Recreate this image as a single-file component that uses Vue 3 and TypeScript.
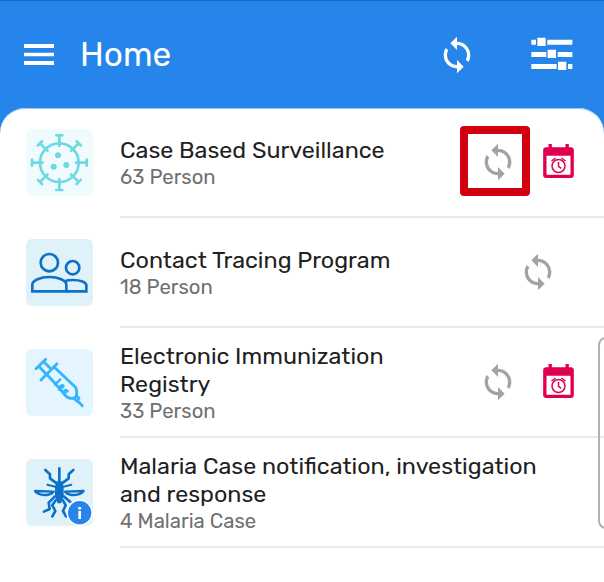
<script setup lang="ts">
type IconName = 'virus' | 'people' | 'syringe' | 'mosquito'

interface Program {
  icon: IconName
  title: string[]
  count: string
  sync: boolean
  calendar: boolean
  marked: boolean
}

const programs: Program[] = [
  {
    icon: 'virus',
    title: ['Case Based Surveillance'],
    count: '63 Person',
    sync: true,
    calendar: true,
    marked: true,
  },
  {
    icon: 'people',
    title: ['Contact Tracing Program'],
    count: '18 Person',
    sync: true,
    calendar: false,
    marked: false,
  },
  {
    icon: 'syringe',
    title: ['Electronic Immunization', 'Registry'],
    count: '33 Person',
    sync: true,
    calendar: true,
    marked: false,
  },
  {
    icon: 'mosquito',
    title: ['Malaria Case notification, investigation', 'and response'],
    count: '4 Malaria Case',
    sync: false,
    calendar: false,
    marked: false,
  },
]

const spokes = [0, 45, 90, 135, 180, 225, 270, 315]
const syncPath =
  'M12 4V1L8 5l4 4V6c3.31 0 6 2.69 6 6 0 1.01-.25 1.97-.7 2.8l1.46 1.46C19.54 15.03 20 13.57 20 12c0-4.42-3.58-8-8-8zm0 14c-3.31 0-6-2.69-6-6 0-1.01.25-1.97.7-2.8L5.24 7.74C4.46 8.97 4 10.43 4 12c0 4.42 3.58 8 8 8v3l4-4-4-4v3z'
</script>

<template>
  <div class="screen">
    <header class="bar">
      <svg class="menu" viewBox="0 0 90 63">
        <path d="M0 0h90v12H0zM0 26h90v11H0zM0 51h90v12H0z" />
      </svg>
      <h1 class="heading">Home</h1>
      <svg class="sync" viewBox="0 0 24 24"><path :d="syncPath" /></svg>
      <svg class="filters" viewBox="333 111 124 102">
        <path
          d="M333 119h14v15h-14zM351 113h25v25h-25zM381 119h75v15h-75zM333 156h45v15h-45zM382 149h25v25h-25zM412 156h44v15h-44zM333 192h76v15h-76zM413 185h25v25h-25zM443 192h13v15h-13z"
        />
      </svg>
    </header>

    <main class="sheet">
      <article v-for="program in programs" :key="program.icon" class="row">
        <div class="tile" :class="program.icon">
          <svg v-if="program.icon === 'virus'" class="art" viewBox="33 27 201 201">
            <g fill="none" stroke="#6fd9e3" stroke-linecap="round">
              <circle cx="133" cy="128" r="58" stroke-width="8" />
              <path
                v-for="angle in spokes"
                :key="angle"
                d="M133 78V48M124 46h18"
                stroke-width="8"
                :transform="`rotate(${angle} 133 128)`"
              />
            </g>
            <g fill="#6fd9e3">
              <circle cx="129" cy="106" r="9" />
              <circle cx="116" cy="140" r="9" />
              <circle cx="154" cy="135" r="9" />
            </g>
          </svg>

          <svg v-else-if="program.icon === 'people'" class="art" viewBox="33 25 201 201">
            <g fill="none" stroke="#0d72c7" stroke-width="8">
              <circle cx="103" cy="96" r="26" />
              <circle cx="173" cy="111" r="20" />
              <path d="M52 182v-20c0-12 24-23 51-23s51 11 51 23v20z" />
              <path d="M154 182h60v-18c0-10-18-16-40-16-10 0-18 1-25 4" />
            </g>
          </svg>

          <svg v-else-if="program.icon === 'syringe'" class="art" viewBox="33 27 201 201">
            <g fill="none" stroke="#35b5fb" stroke-width="8.500" stroke-linecap="round" stroke-linejoin="round">
              <path d="M63 86L92 58M78 120L126 71M72 79L90 99M86 65L106 85" />
              <path d="M96 104l24 26 33 38c5 6 14 8 24 7l7-7c2-12 2-22-4-28L118 82" />
              <path d="M120 134l16-16M134 144c0-7 7-11 12-6M145 159c0-8 7-12 13-6M132 149c4-5 8-8 13-8M146 162c4-5 7-8 12-8" stroke-width="7" />
              <path d="M177 175l8 8 7-8-7-7M188 183l14 14" />
            </g>
          </svg>

          <svg v-else class="art" viewBox="33 27 201 201">
            <g fill="none" stroke="#0d72c7" stroke-width="8" stroke-linecap="round" stroke-linejoin="round">
              <path d="M133 55v50" />
              <path d="M91 60l14 13v12l21 16M175 60l-14 13v12l-21 16" />
              <path d="M60 123l56 2c-6 10-25 12-40 8-8-2-14-6-16-10zM206 123l-56 2c6 10 25 12 40 8 8-2 14-6 16-10z" stroke-width="7" />
              <path d="M121 110l-24-6M145 110l24-6" stroke-width="6" />
              <path d="M120 139l-19 19 3 19-17 8M122 151l-10 15 9 17-9 16M146 139l20 17M144 151l8 15-8 17 9 16" />
            </g>
            <path d="M125 94h16l5 16v30l-8 20h-10l-8-20v-30z" fill="#0d72c7" />
            <circle cx="194" cy="188" r="40" fill="#fff" opacity="0.9" />
            <circle cx="194" cy="188" r="35" fill="#2585eb" />
            <circle cx="194" cy="175" r="4.500" fill="#fff" />
            <path d="M190 183h8v24h-8z" fill="#fff" />
          </svg>
        </div>

        <div class="body">
          <div class="label">
            <div class="title">
              <span v-for="line in program.title" :key="line" class="line">{{ line }}</span>
            </div>
            <div class="count">{{ program.count }}</div>
          </div>
          <div v-if="program.sync" class="actions" :class="{ single: !program.calendar }">
            <span class="state" :class="{ marked: program.marked }">
              <svg class="sync" viewBox="0 0 24 24"><path :d="syncPath" /></svg>
            </span>
            <svg v-if="program.calendar" class="calendar" viewBox="279 87 92 102">
              <path
                fill-rule="evenodd"
                d="M295 87h10v10h41v-10h10v10h6q9 0 9 9v74q0 9-9 9h-74q-9 0-9-9v-74q0-9 9-9h7zM289 122v57h72v-57z"
              />
              <g fill="none" stroke="#e0004f" stroke-width="4.500">
                <circle cx="325" cy="153" r="19.500" />
                <path d="M325 141v13l8 6M304 138l12-9M346 138l-12-9" />
              </g>
            </svg>
          </div>
        </div>
      </article>
      <div class="handle"></div>
    </main>
  </div>
</template>

<style>
body {
  margin: 0;
  background: #fff;
}
</style>

<style scoped>
.screen {
  width: 604px;
  height: 582px;
  box-sizing: border-box;
  overflow: hidden;
  background: #2585eb;
  border-top: 1px solid #1769c5;
  font-family: Rubik, Roboto, sans-serif;
}
.bar {
  height: 107px;
  display: flex;
  align-items: center;
  box-sizing: border-box;
  padding: 0 31px 0 24px;
}
.bar svg {
  fill: #fff;
}
.menu {
  width: 30px;
  height: 21px;
}
.heading {
  margin: 0 auto 0 26px;
  font-size: 33.3px;
  font-weight: 400;
  line-height: 40px;
  color: #fff;
}
.sync {
  display: block;
  flex: none;
  width: 40px;
  height: 40px;
}
.filters {
  width: 42px;
  height: 34px;
  margin: 0 0 2px 54px;
}
.sheet {
  position: relative;
  height: 474px;
  background: #fff;
  border-radius: 25px 25px 0 0;
  box-shadow: inset 0 1px 0 #9cc8f6;
}
.row {
  display: flex;
  height: 110px;
  padding-left: 26px;
}
.tile {
  width: 67px;
  height: 67px;
  margin: 21px 27px 0 0;
  border-radius: 6px;
}
.virus {
  background: #f0fbfe;
}
.people {
  background: #dff1f9;
}
.syringe {
  background: #e5f5ff;
}
.mosquito {
  background: #dff1f9;
}
.art {
  display: block;
  width: 67px;
  height: 67px;
}
.body {
  flex: 1;
  display: flex;
  justify-content: space-between;
  align-items: center;
  box-sizing: border-box;
  border-bottom: 2px solid #e9e9e9;
}
.label {
  padding-top: 2px;
  white-space: nowrap;
}
.title {
  font-size: 23.3px;
  line-height: 28px;
  color: #212121;
}
.line {
  display: block;
}
.count {
  font-size: 20.3px;
  line-height: 26px;
  color: #707070;
}
.actions {
  display: flex;
  align-items: center;
  gap: 13px;
  margin: 0 30px 2px 0;
}
.single {
  margin: 0 31px 0 0;
}
.state {
  box-sizing: border-box;
  width: 70px;
  height: 70px;
  display: flex;
  align-items: center;
  justify-content: center;
  fill: #a3a3a3;
}
.actions:not(.single) .state {
  padding: 2px 0 0 5px;
}
.marked {
  border: 8px solid #d2000f;
  border-radius: 4px;
}
.calendar {
  width: 31px;
  height: 34px;
  fill: #e0004f;
}
.handle {
  position: absolute;
  top: 229px;
  right: -14px;
  width: 16px;
  height: 188px;
  border: 2px solid #b0b0b0;
  border-radius: 8px;
}
</style>
